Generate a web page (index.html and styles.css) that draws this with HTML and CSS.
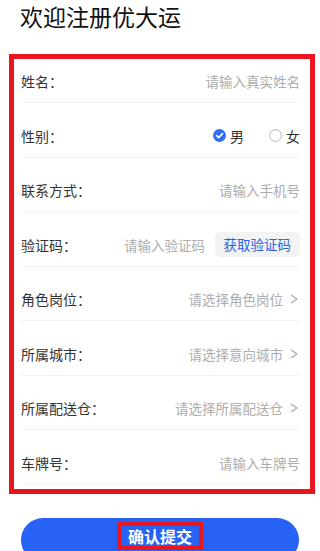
FILE: index.html
```html
<!DOCTYPE html>
<html lang="zh-CN">
<head>
    <meta charset="UTF-8">
    <meta name="viewport" content="width=device-width, initial-scale=1.0">
    <title>欢迎注册优大运</title>
    <link rel="stylesheet" href="styles.css">
</head>
<body>
    <h1 class="title">欢迎注册优大运</h1>

    <div class="form">
        <div class="row">
            <span class="label">姓名：</span>
            <span class="hint">请输入真实姓名</span>
        </div>
        <div class="row">
            <span class="label">性别：</span>
            <div class="gender">
                <span class="option">
                    <svg class="radio" viewBox="0 0 13 13" width="13" height="13">
                        <circle cx="6.5" cy="6.5" r="6.5" fill="#2f6ef5"/>
                        <polyline points="3.6,6.7 5.7,8.7 9.5,4.6" fill="none" stroke="#fff" stroke-width="1.6" stroke-linecap="round" stroke-linejoin="round"/>
                    </svg>
                    男
                </span>
                <span class="option">
                    <svg class="radio" viewBox="0 0 13 13" width="13" height="13">
                        <circle cx="6.5" cy="6.5" r="5.9" fill="#fff" stroke="#c4c4c4" stroke-width="1.1"/>
                    </svg>
                    女
                </span>
            </div>
        </div>
        <div class="row">
            <span class="label">联系方式：</span>
            <span class="hint">请输入手机号</span>
        </div>
        <div class="row">
            <span class="label">验证码：</span>
            <div class="code">
                <span class="hint">请输入验证码</span>
                <span class="code-btn">获取验证码</span>
            </div>
        </div>
        <div class="row">
            <span class="label">角色岗位：</span>
            <span class="hint">请选择角色岗位<svg class="arrow" viewBox="0 0 8 10" width="8" height="10"><polyline points="1,1 7,5 1,9" fill="none" stroke="#a8a8a8" stroke-width="1.2"/></svg></span>
        </div>
        <div class="row">
            <span class="label">所属城市：</span>
            <span class="hint">请选择意向城市<svg class="arrow" viewBox="0 0 8 10" width="8" height="10"><polyline points="1,1 7,5 1,9" fill="none" stroke="#a8a8a8" stroke-width="1.2"/></svg></span>
        </div>
        <div class="row">
            <span class="label">所属配送仓：</span>
            <span class="hint">请选择所属配送仓<svg class="arrow" viewBox="0 0 8 10" width="8" height="10"><polyline points="1,1 7,5 1,9" fill="none" stroke="#a8a8a8" stroke-width="1.2"/></svg></span>
        </div>
        <div class="row">
            <span class="label">车牌号：</span>
            <span class="hint">请输入车牌号</span>
        </div>

        <div class="mark"></div>
    </div>

    <div class="submit">
        <span class="submit-text">确认提交</span>
    </div>
</body>
</html>
```

FILE: styles.css
```css
body {
    margin: 0;
    background: #fff;
    font-family: "Noto Sans CJK SC", "Noto Sans", sans-serif;
    color: #333;
    overflow: hidden;
}
.title {
    margin: 0;
    padding-left: 20px;
    font-size: 23px;
    font-weight: normal;
    line-height: 32px;
    color: #111;
}
.form {
    position: relative;
    margin-top: 16.4px;
    padding: 0 20px 0 21px;
}
.row {
    display: flex;
    justify-content: space-between;
    align-items: center;
    box-sizing: border-box;
    height: 54.57px;
    padding-top: 11.6px;
    border-bottom: 1px solid #f2f2f2;
}
.row:last-of-type {
    border-bottom: none;
}
.label {
    font-size: 14px;
    line-height: 20px;
    color: #333;
}
.hint {
    display: flex;
    align-items: center;
    font-size: 13.5px;
    line-height: 20px;
    color: #adadad;
}
.arrow {
    margin-left: 7px;
    margin-right: 2px;
}
.gender {
    display: flex;
    align-items: center;
    gap: 25px;
}
.option {
    display: flex;
    align-items: center;
    gap: 4px;
    font-size: 14px;
    line-height: 20px;
    color: #333;
}
.code {
    display: flex;
    align-items: center;
    gap: 9.5px;
}
.code-btn {
    padding: 0 9px;
    height: 25px;
    line-height: 25px;
    font-size: 13.5px;
    color: #2f5fe3;
    background: #f2f3f5;
    border-radius: 5px;
}
.mark {
    position: absolute;
    left: 9px;
    top: 5.6px;
    width: 306px;
    height: 440.5px;
    box-sizing: border-box;
    border: 5px solid #e8161e;
    pointer-events: none;
}
.submit {
    display: flex;
    justify-content: center;
    align-items: flex-start;
    box-sizing: border-box;
    margin: 33px 21px 0;
    height: 44px;
    padding-top: 4px;
    border-radius: 22px;
    background: #2762f5;
}
.submit-text {
    padding: 0 7px;
    border: 4px solid #e8161e;
    font-size: 16px;
    font-weight: bold;
    line-height: 20px;
    color: #fff;
}
```
